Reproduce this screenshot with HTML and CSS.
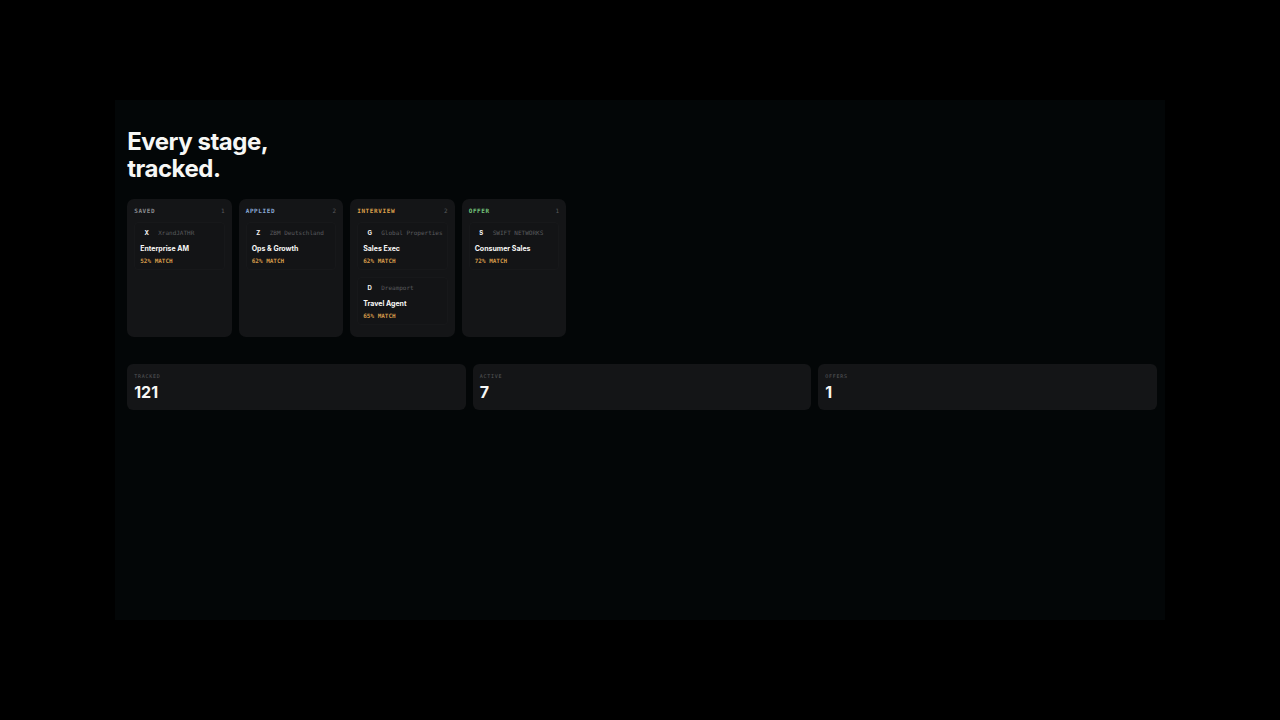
FILE: index.html
```html
<!DOCTYPE html>
<html lang="en">
<head>
    <meta charset="UTF-8">
    <meta name="viewport" content="width=device-width, initial-scale=1.0">
    <title>Job Tracker</title>
    <link rel="stylesheet" href="styles.css">
</head>
<body>

    <main class="stage">
        <h1>Every stage,<br>tracked.</h1>

        <div class="board">
            <section class="column saved">
                <header><h2>SAVED</h2><span class="count">1</span></header>
                <article class="card">
                    <div class="company"><span class="logo">X</span><span class="name">XrandJATHR</span></div>
                    <h3>Enterprise AM</h3>
                    <p class="match">52% MATCH</p>
                </article>
            </section>
            <section class="column applied">
                <header><h2>APPLIED</h2><span class="count">2</span></header>
                <article class="card">
                    <div class="company"><span class="logo">Z</span><span class="name">ZBM Deutschland</span></div>
                    <h3>Ops &amp; Growth</h3>
                    <p class="match">62% MATCH</p>
                </article>
            </section>
            <section class="column interview">
                <header><h2>INTERVIEW</h2><span class="count">2</span></header>
                <article class="card">
                    <div class="company"><span class="logo">G</span><span class="name">Global Properties</span></div>
                    <h3>Sales Exec</h3>
                    <p class="match">62% MATCH</p>
                </article>
                <article class="card">
                    <div class="company"><span class="logo">D</span><span class="name">Dreamport</span></div>
                    <h3>Travel Agent</h3>
                    <p class="match">65% MATCH</p>
                </article>
            </section>
            <section class="column offer">
                <header><h2>OFFER</h2><span class="count">1</span></header>
                <article class="card">
                    <div class="company"><span class="logo">S</span><span class="name">SWIFT NETWORKS</span></div>
                    <h3>Consumer Sales</h3>
                    <p class="match">72% MATCH</p>
                </article>
            </section>
        </div>

        <dl class="stats">
            <div class="stat"><dt>TRACKED</dt><dd>121</dd></div>
            <div class="stat"><dt>ACTIVE</dt><dd>7</dd></div>
            <div class="stat"><dt>OFFERS</dt><dd>1</dd></div>
        </dl>
    </main>

</body>
</html>
```
FILE: styles.css
```css
* {
    box-sizing: border-box;
    margin: 0;
    padding: 0;
}
body {
    min-height: 100vh;
    padding: 100px 9%;
    display: flex;
    background: #000;
    color: #f7f7f5;
    font-family: Inter, "Liberation Sans", sans-serif;
}
.stage {
    flex: 1;
    padding: 28px 8px 28px 12px;
    background: #030607;
}
h1 {
    font-size: 24px;
    line-height: 27px;
    font-weight: 700;
    letter-spacing: -0.02em;
}
.board {
    display: grid;
    grid-template-columns: repeat(4, 1fr);
    gap: 7px;
    max-width: 439px;
    margin-top: 17px;
}
.column {
    min-width: 0;
    padding: 7px 7px 12px;
    border-radius: 7px;
    background: #141517;
}
.column header {
    display: flex;
    justify-content: space-between;
    height: 10px;
    margin-bottom: 6px;
    font-family: "DejaVu Sans Mono", monospace;
    font-size: 6px;
    line-height: 10px;
}
.column h2 {
    font-size: 6px;
    font-weight: 700;
    letter-spacing: 0.1em;
}
.count {
    color: #58595c;
}
.saved h2 { color: #8b8c90; }
.applied h2 { color: #8aa9d6; }
.interview h2 { color: #dca04c; }
.offer h2 { color: #74c47c; }
.card {
    height: 48px;
    padding: 4px 5px;
    border: 1px solid #17181a;
    border-radius: 4px;
    background: #131416;
}
.card + .card {
    margin-top: 7px;
}
.company {
    display: flex;
    align-items: center;
    gap: 5px;
    height: 12px;
    line-height: 10px;
    white-space: nowrap;
}
.logo {
    width: 13px;
    flex: none;
    text-align: center;
    font-size: 6px;
    font-weight: 700;
}
.name {
    font-family: "DejaVu Sans Mono", monospace;
    font-size: 6px;
    color: #5a5b5e;
}
.card h3 {
    margin-top: 5px;
    font-size: 7px;
    line-height: 10px;
    font-weight: 700;
    white-space: nowrap;
}
.match {
    margin-top: 2px;
    font-family: "DejaVu Sans Mono", monospace;
    font-size: 6px;
    line-height: 10px;
    font-weight: 700;
    color: #d39a4a;
}
.stats {
    display: grid;
    grid-template-columns: repeat(3, 1fr);
    gap: 7px;
    margin-top: 27px;
}
.stat {
    padding: 7px;
    border-radius: 6px;
    background: #141517;
}
.stat dt {
    font-family: "DejaVu Sans Mono", monospace;
    font-size: 5px;
    line-height: 10px;
    letter-spacing: 0.15em;
    color: #58595c;
}
.stat dd {
    font-size: 16px;
    line-height: 22px;
    font-weight: 700;
}
```
